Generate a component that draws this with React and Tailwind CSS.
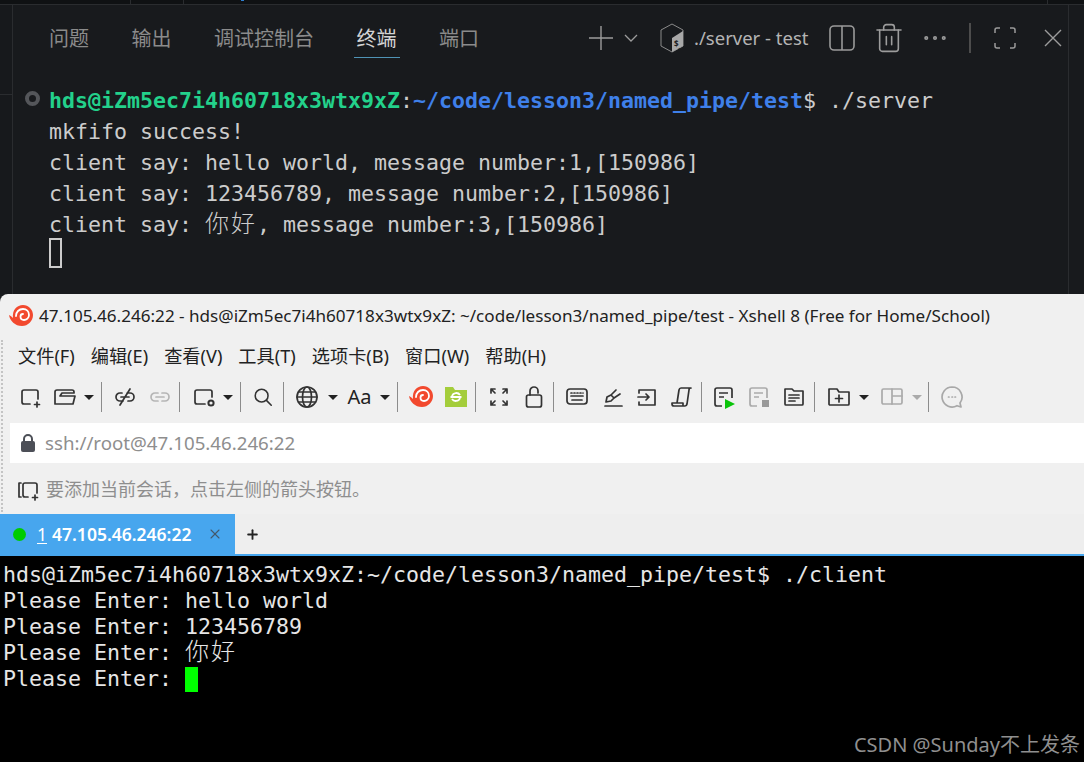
import { Plus, Trash2, MoreHorizontal, X } from 'lucide-react'

const mono = "font-['DejaVu_Sans_Mono','Noto_Sans_CJK_SC',monospace]"
const ui = "font-['Noto_Sans','Noto_Sans_CJK_SC',sans-serif]"

const panelTabs = ['问题', '输出', '调试控制台', '终端', '端口']
const menus = ['文件(F)', '编辑(E)', '查看(V)', '工具(T)', '选项卡(B)', '窗口(W)', '帮助(H)']

// 两个字宽占两列，单独放大一点
function Cjk({ children }) {
  return <span className="text-[24px] leading-none tracking-[2px] font-light">{children}</span>
}

function Icon({ children, size = 24, view = 24, color = '#333', sw = 1.7 }) {
  return (
    <svg width={size} height={size} viewBox={`0 0 ${view} ${view}`} fill="none" stroke={color} strokeWidth={sw} strokeLinecap="round" strokeLinejoin="round">
      {children}
    </svg>
  )
}

function Tool({ children, className = '' }) {
  return <div className={`w-[35px] h-[30px] flex items-center justify-center shrink-0 ${className}`}>{children}</div>
}

function Caret({ className = '', light }) {
  return (
    <div className={`w-[12px] flex justify-center shrink-0 ${className}`}>
      <div className={`w-0 h-0 border-x-[5px] border-x-transparent border-t-[5px] ${light ? 'border-t-[#aaa]' : 'border-t-[#222]'}`} />
    </div>
  )
}

function Sep({ className = '' }) {
  return <div className={`w-px h-[30px] bg-[#8c8c8c] shrink-0 ${className}`} />
}

function Snail({ size = 24 }) {
  return (
    <svg width={size} height={size} viewBox="0 0 24 24" fill="none">
      <path d="M0 11c2 1 3 2 4 3C3 6 8 1 14 1c5.500 0 10 4.500 10 10 0 6-5 11-11 11C6 22 1 17 0 11z" fill="#f2492e" />
      <path d="M7 12c0-4 3-7 7-7 3.500 0 6 2.500 6 6 0 3-2.500 5-5 5-2 0-3.500-1.500-3.500-3.500 0-1.500 1-2.500 2.500-2.500" stroke="#fff" strokeWidth="1.8" strokeLinecap="round" />
    </svg>
  )
}

function Toolbar() {
  return (
    <div className="h-[48px] pb-[4px] flex items-center pl-[12px]">
      <Tool>
        <Icon><path d="M12 19H6a2 2 0 0 1-2-2V7a2 2 0 0 1 2-2h12a2 2 0 0 1 2 2v7" /><path d="M19 17v5M16.500 19.500h5" /></Icon>
      </Tool>
      <Tool>
        <Icon><path d="M2 19V7a2 2 0 0 1 2-2h15a2 2 0 0 1 2 2v1H9l-2 3h15l-2 8z" /></Icon>
      </Tool>
      <Caret className="ml-px" />
      <Sep className="ml-[6px] mr-[5px]" />
      <Tool>
        <Icon><path d="M9 8H7a4 4 0 0 0 0 8h3M14 8h3a4 4 0 0 1 0 8h-2M8 12h8M17 4 7 20" /></Icon>
      </Tool>
      <Tool>
        <Icon color="#b5b5b5"><path d="M10 8H7a4 4 0 0 0 0 8h3M14 8h3a4 4 0 0 1 0 8h-3M8 12h8" /></Icon>
      </Tool>
      <Sep className="ml-[2px] mr-[6px]" />
      <Tool>
        <Icon><path d="M13 19H5a2 2 0 0 1-2-2V7a2 2 0 0 1 2-2h13a2 2 0 0 1 2 2v5" /><circle cx="19" cy="18" r="2.600" strokeWidth="2" /></Icon>
      </Tool>
      <Caret className="ml-px" />
      <Sep className="ml-[6px] mr-[4px]" />
      <Tool>
        <Icon size={22}><circle cx="10.500" cy="10.500" r="7" /><path d="m16 16 5 5" /></Icon>
      </Tool>
      <Sep className="ml-[3px] mr-[5px]" />
      <Tool>
        <Icon><circle cx="12" cy="12" r="10" /><ellipse cx="12" cy="12" rx="4.500" ry="10" /><path d="M2 12h20M3.500 7h17M3.500 17h17" /></Icon>
      </Tool>
      <Caret className="ml-[3px]" />
      <Tool className={`ml-[3px] text-[20px] text-[#222] ${ui}`}>Aa</Tool>
      <Caret className="ml-[2px]" />
      <Sep className="ml-[6px] mr-[5px]" />
      <Tool><Snail /></Tool>
      <Tool>
        <svg width="22" height="20" viewBox="0 0 22 20">
          <path d="M0 0h8l2 3h12v17H0z" fill="#a4cd3b" />
          <path d="M7 9a4.500 4.500 0 0 1 8-1M15 11a4.500 4.500 0 0 1-8 1M5.500 10h11" stroke="#fff" strokeWidth="1.800" fill="none" />
        </svg>
      </Tool>
      <Sep className="ml-[2px] mr-[5px]" />
      <Tool>
        <Icon color="#333" sw={1.7}><path d="M4 8V4h4M20 8V4h-4M4 16v4h4M20 16v4h-4M4 4l4 4M20 4l-4 4M4 20l4-4M20 20l-4-4" /></Icon>
      </Tool>
      <Tool>
        <Icon><rect x="4.500" y="10" width="15" height="12" rx="2" /><path d="M8 10V6a4 4 0 0 1 8 0v2" /></Icon>
      </Tool>
      <Sep className="ml-[2px] mr-[5px]" />
      <Tool>
        <Icon><rect x="2" y="4" width="20" height="15" rx="3" /><path d="M6 8h1M9 8h1M12 8h1M15 8h1M18 8h0M6 11h12M7 15h10" /></Icon>
      </Tool>
      <Tool>
        <Icon><path d="M5 21h17M6 17l1-5 4-2 3 3-3 3zM11 10l5-5M14 13l6-4" /></Icon>
      </Tool>
      <Tool>
        <Icon><path d="M4 8V5h16v15H4v-3M3 12h11M11 9l3 3-3 3" /></Icon>
      </Tool>
      <Tool>
        <Icon><path d="M7 18 9 5c.2-1 1-2 2-2h10c-1 0-2 1-2 2l-2 14c-.2 1-1 2-2 2H4c-1 0-2-1-2-2v-1h11v2" /></Icon>
      </Tool>
      <Sep className="ml-[2px] mr-[4px]" />
      <Tool>
        <svg width="24" height="24" viewBox="0 0 24 24" fill="none" stroke="#333" strokeWidth="1.700">
          <path d="M10 21H5a2 2 0 0 1-2-2V5a2 2 0 0 1 2-2h13a2 2 0 0 1 2 2v8M7 8h9M7 12h5" />
          <path d="M13 14l10 5-10 5z" fill="#0ac40a" stroke="none" />
        </svg>
      </Tool>
      <Tool>
        <svg width="24" height="24" viewBox="0 0 24 24" fill="none" stroke="#aaa" strokeWidth="1.700">
          <path d="M10 21H5a2 2 0 0 1-2-2V5a2 2 0 0 1 2-2h13a2 2 0 0 1 2 2v8M7 8h9M7 12h5" />
          <rect x="15" y="15" width="7" height="7" fill="#999" stroke="none" />
        </svg>
      </Tool>
      <Tool>
        <Icon><path d="M3 19V4h7l2 2h9v13a1 1 0 0 1-1 1H4a1 1 0 0 1-1-1zM7 10h10M7 13h10M7 16h6" /></Icon>
      </Tool>
      <Sep className="ml-[3px] mr-[6px]" />
      <Tool>
        <Icon><path d="M2 19V4h8l2 3h10v12a1 1 0 0 1-1 1H3a1 1 0 0 1-1-1zM12 10v7M8.500 13.500h7" /></Icon>
      </Tool>
      <Caret className="ml-[2px]" />
      <Tool className="ml-[4px]">
        <Icon color="#aaa"><rect x="2" y="4" width="20" height="15" rx="1.500" /><path d="M12 4v15M12 11h10" /></Icon>
      </Tool>
      <Caret className="ml-[2px]" light />
      <Sep className="ml-[5px] mr-[5px]" />
      <Tool>
        <Icon color="#a8a8a8"><path d="M12 2a10 10 0 1 0 5 18.700l4 1.300-1-4A10 10 0 0 0 12 2z" /><path d="M8.500 12h.5M12 12h.5M15 12h.5" /></Icon>
      </Tool>
    </div>
  )
}

function TopPanel() {
  return (
    <div className="h-[294px] shrink-0 flex flex-col bg-[#181a1d]">
      <div className="h-[5px] shrink-0 bg-[#0f1113] border-b border-[#2a2c2f] flex">
        <div className="w-[131px] border-r border-[#2a2c2f]" />
        <div className="w-[53px] border-r border-[#2a2c2f]" />
        <div className="ml-[57px] w-[3px] h-px bg-[#2f7fd0]" />
        <div className="ml-auto w-[37px] border-l border-[#2a2c2f]" />
      </div>
      <div className="flex-1 flex min-h-0">
        <div className="w-[13px] shrink-0 border-r border-[#2a2c2f] bg-[#17191c] flex flex-col">
          <div className="h-[90px] border-b border-[#2a2c2f]" />
        </div>
        <div className="flex-1 min-w-0 flex flex-col">
          <div className="h-[80px] shrink-0 flex items-start">
            <div className="flex gap-[42.500px] pl-[36px] pt-[20px]">
              {panelTabs.map((t, i) => (
                <div key={t} className={`relative h-[33px] text-[20px] leading-[28px] ${ui} ${i === 3 ? 'text-[#d4d4d4]' : 'text-[#8b8b8b]'}`}>
                  {t}
                  {i === 3 && <div className="absolute left-[-3px] right-[-3px] bottom-0 h-px bg-[#4f93b5]" />}
                </div>
              ))}
            </div>
            <div className="ml-auto h-[66px] flex items-center pr-[6px] text-[#9c9c9c]">
              <svg width="24" height="24" viewBox="0 0 24 24" fill="none" stroke="currentColor" strokeWidth="1.400">
                <path d="M12 0v24M0 12h24" />
              </svg>
              <svg width="14" height="8" viewBox="0 0 14 8" fill="none" stroke="currentColor" strokeWidth="1.300" className="ml-[11px]">
                <path d="m1 1 6 6 6-6" />
              </svg>
              <svg width="26" height="30" viewBox="0 0 26 30" fill="none" className="ml-[21px]">
                <path d="M13 1 24 7v16L13 29 2 23V7z" stroke="#8a8a8a" strokeWidth="1" />
                <path d="M13 15 24 8v15L13 29z" fill="#a8a8a8" />
                <text x="15" y="24" fontSize="8" fontWeight="700" fill="#222">$_</text>
              </svg>
              <span className={`ml-[9px] w-[115px] text-[18.500px] whitespace-nowrap text-[#b4b4b4] ${ui}`}>./server - test</span>
              <svg width="26" height="26" viewBox="0 0 26 26" fill="none" stroke="#9a9a9a" strokeWidth="1.600" className="ml-[20px]">
                <rect x="1" y="1" width="24" height="24" rx="4" />
                <path d="M13 1v24" />
              </svg>
              <Trash2 size={32} strokeWidth={1.200} className="ml-[18px]" />
              <MoreHorizontal size={30} strokeWidth={1.300} className="ml-[15px]" />
              <div className="ml-[19px] w-[2px] h-[30px] bg-[#4c4c4c]" />
              <svg width="24" height="24" viewBox="0 0 24 24" fill="none" stroke="#9a9a9a" strokeWidth="1.500" className="ml-[22px]">
                <path d="M2 7V4a2 2 0 0 1 2-2h3M17 2h3a2 2 0 0 1 2 2v3M2 17v3a2 2 0 0 0 2 2h3M17 22h3a2 2 0 0 0 2-2v-3" />
              </svg>
              <svg width="18" height="18" viewBox="0 0 18 18" fill="none" stroke="currentColor" strokeWidth="1.400" className="ml-[27px]">
                <path d="m1 1 16 16M17 1 1 17" />
              </svg>
            </div>
          </div>
          <div className={`relative pl-[36px] text-[21.600px] leading-[31px] text-[#cccccc] ${mono}`}>
            <div className="absolute left-[12px] top-[6px] w-[15px] h-[15px] rounded-full border-[4px] border-[#54565a]" />
            <div className="whitespace-pre">
              <span className="font-bold text-[#23d18b]">hds@iZm5ec7i4h60718x3wtx9xZ</span>:<span className="font-bold text-[#3f80ea]">~/code/lesson3/named_pipe/test</span>$ ./server
            </div>
            <div className="whitespace-pre">mkfifo success!</div>
            <div className="whitespace-pre">client say: hello world, message number:1,[150986]</div>
            <div className="whitespace-pre">client say: 123456789, message number:2,[150986]</div>
            <div className="whitespace-pre h-[31px]">client say: <Cjk>你好</Cjk>, message number:3,[150986]</div>
            <div className="w-[13px] h-[30px] -mt-[2px] border-2 border-[#cccccc]" />
          </div>
        </div>
        <div className="w-[16px] shrink-0 border-l border-[#2a2c2f]" />
      </div>
    </div>
  )
}

function Xshell() {
  return (
    <div className={`relative h-[262px] shrink-0 flex flex-col bg-[#f0f0f0] rounded-tl-[8px] ${ui}`}>
      <div className="absolute left-[1px] top-[46px] h-[172px] border-l-2 border-dotted border-[#c4c4c4]" />
      <div className="h-[44px] flex items-center pl-[9px] text-[17.100px] text-[#222] whitespace-nowrap">
        <Snail />
        <span className="ml-[6px]">47.105.46.246:22 - hds@iZm5ec7i4h60718x3wtx9xZ: ~/code/lesson3/named_pipe/test - Xshell 8 (Free for Home/School)</span>
      </div>
      <div className="h-[37px] flex items-center gap-[16px] pl-[18px] text-[18.200px] text-[#222] whitespace-nowrap">
        {menus.map(m => <span key={m}>{m}</span>)}
      </div>
      <Toolbar />
      <div className="h-[40px] ml-[10px] bg-white flex items-center pl-[10px] text-[18.700px] text-[#8e8e8e]">
        <svg width="16" height="18" viewBox="0 0 16 18" fill="#4c4f57">
          <rect x="1" y="7" width="14" height="11" rx="2" />
          <path d="M4 8V5a4 4 0 0 1 8 0v3" fill="none" stroke="#4c4f57" strokeWidth="2" />
        </svg>
        <span className="ml-[9px]">ssh://root@47.105.46.246:22</span>
      </div>
      <div className="h-[51px] pt-[2px] flex items-center pl-[16px] text-[18px] text-[#8e8e8e]">
        <Icon size={24}><path d="M5 5H3v14h2M12 19H9a2 2 0 0 1-2-2V7a2 2 0 0 1 2-2h10a2 2 0 0 1 2 2v8" /><path d="M19 17v5M16.500 19.500h5" /></Icon>
        <span className="ml-[6px]">要添加当前会话，点击左侧的箭头按钮。</span>
      </div>
      <div className="h-[42px] bg-[#eeeeee] flex border-b-2 border-[#47a6ee]">
        <div className="w-[235px] bg-[#47a6ee] flex items-center pl-[13px] text-white text-[17.500px] font-semibold">
          <div className="w-[13px] h-[13px] rounded-full bg-[#00cc00]" />
          <span className="ml-[11px] underline underline-offset-2 font-normal">1</span>
          <span className="ml-[5px]">47.105.46.246:22</span>
          <X size={16} strokeWidth={1.600} className="ml-[16px] text-[#44586b]" />
        </div>
        <Plus size={15} strokeWidth={3} className="ml-[10px] self-center text-[#222]" />
      </div>
    </div>
  )
}

function ClientTerminal() {
  return (
    <div className={`flex-1 bg-black pt-[6px] pl-[3px] text-[21.600px] leading-[26px] text-[#e6e6e6] ${mono}`}>
      <div className="whitespace-pre">hds@iZm5ec7i4h60718x3wtx9xZ:~/code/lesson3/named_pipe/test$ ./client</div>
      <div className="whitespace-pre">Please Enter: hello world</div>
      <div className="whitespace-pre">Please Enter: 123456789</div>
      <div className="whitespace-pre h-[26px]">Please Enter: <Cjk>你好</Cjk></div>
      <div className="h-[26px] flex items-center whitespace-pre">
        Please Enter: <div className="w-[13px] h-[25px] bg-[#00ff00]" />
      </div>
    </div>
  )
}

export default function App() {
  return (
    <div className="relative w-[1084px] h-[762px] flex flex-col overflow-hidden bg-[#181a1d]">
      <TopPanel />
      <Xshell />
      <ClientTerminal />
      <div className={`absolute right-[4px] bottom-[3px] text-[20px] leading-[28px] text-[#8f8f8f] ${ui}`}>CSDN @Sunday不上发条</div>
    </div>
  )
}
